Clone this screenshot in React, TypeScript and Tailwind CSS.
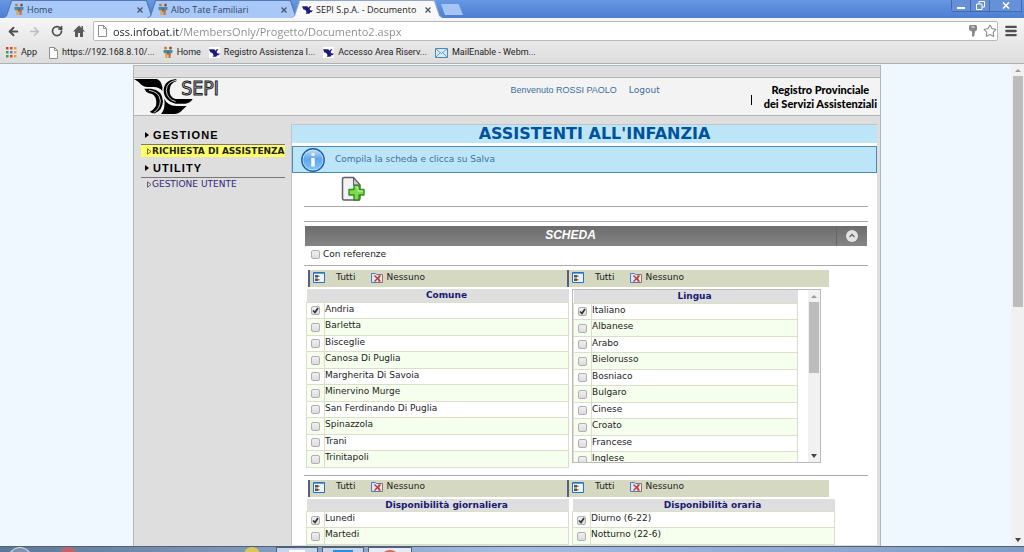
import React, { useState } from 'react';
import { ArrowLeft, ArrowRight, RotateCw, Star, Menu } from 'lucide-react';
import { clsx } from 'clsx';

const UI = "font-['Open_Sans','Noto_Sans',sans-serif]";
const VERDANA = "font-['DejaVu_Sans',sans-serif]";
const ARIAL = "font-['Liberation_Sans',sans-serif]";

const comuni = [
  'Andria',
  'Barletta',
  'Bisceglie',
  'Canosa Di Puglia',
  'Margherita Di Savoia',
  'Minervino Murge',
  'San Ferdinando Di Puglia',
  'Spinazzola',
  'Trani',
  'Trinitapoli',
];

const lingue = [
  'Italiano',
  'Albanese',
  'Arabo',
  'Bielorusso',
  'Bosniaco',
  'Bulgaro',
  'Cinese',
  'Croato',
  'Francese',
  'Inglese',
];

/* ---------- icons ---------- */

function PeopleIcon() {
  return (
    <svg width="10" height="13" viewBox="0 0 20 26" className="shrink-0" aria-hidden="true">
      <circle cx="5" cy="4" r="3" fill="#d97a2b" />
      <circle cx="15" cy="4" r="3" fill="#8a5a3a" />
      <path d="M1 8h18v5l-3 2H4l-3-2z" fill="#3f8fb5" />
      <path d="M4 14h5v10H5z" fill="#e8a13a" />
      <path d="M11 14h5l-1 10h-4z" fill="#d9692b" />
      <path d="M8 9h4v8H8z" fill="#5b6f7d" />
    </svg>
  );
}

function SepiIcon() {
  return (
    <svg width="11" height="11" viewBox="0 0 24 24" className="shrink-0" aria-hidden="true">
      <path fill="#fff" d="M0 0h24v24H0z" />
      <path
        fill="#1c1c7c"
        d="M0 5h10q3 0 4 3l3-3h4l-4 4q-1 5 3 5h4l-3 4h-3l-2 3h-8q3-3 1-6-2-3-6-3z"
      />
    </svg>
  );
}

function PageIcon() {
  return (
    <svg width="9" height="12" viewBox="0 0 9 12" className="shrink-0" aria-hidden="true">
      <path d="M.5.5h5l3 3v8h-8z" fill="#fff" stroke="#8d8d8d" />
      <path d="M5.500.5v3h3" fill="none" stroke="#8d8d8d" />
    </svg>
  );
}

function AppsIcon() {
  const colors = ['#d8412f', '#d8412f', '#e6a23c', '#3f9d4f', '#4f7fd0', '#e6a23c', '#3f9d4f', '#d8412f', '#e6a23c'];
  return (
    <svg width="11" height="11" viewBox="0 0 11 11" className="shrink-0" aria-hidden="true">
      {colors.map((c, i) => (
        <rect key={i} x={(i % 3) * 4} y={Math.floor(i / 3) * 4} width="2.500" height="2.500" fill={c} />
      ))}
    </svg>
  );
}

function MailIcon() {
  return (
    <svg width="13" height="10" viewBox="0 0 13 10" className="shrink-0" aria-hidden="true">
      <path d="M.5.5h12v9H.5z" fill="#d5e8f6" stroke="#4d87b5" />
      <path d="M1 1l5.500 4.500L12 1M1 9l4-4M12 9L8 5" fill="none" stroke="#6aa0c8" />
    </svg>
  );
}

function HomeIcon() {
  return (
    <svg width="12" height="12" viewBox="0 0 12 12" aria-hidden="true">
      <path d="M6 .5L0 6.500h2V12h3V8h2v4h3V6.500h2l-2-2V1H8.500v2z" fill="#5a5a5a" />
    </svg>
  );
}

function KeyIcon() {
  return (
    <svg width="8" height="12" viewBox="0 0 8 12" aria-hidden="true">
      <path d="M1 0h6l1 1v4L6 6.500V8L5 9l1 1-2 2-1-1V6.500L0 5V1z" fill="#8a8a8a" />
      <path d="M2.500 1.500h3v1h-3z" fill="#fff" />
    </svg>
  );
}

function SepiLogo() {
  return (
    <svg width="88" height="36" viewBox="15 54 264 108" role="img" aria-label="SEPI">
      <path d="M15 57h68q14 3 17 26-10-6-28-6H52q-15-1-22-10z" />
      <path d="M30 66q8 14 24 15h20q18 1 26 12V80L80 64z" />
      <path d="M46 86h20q34 4 36 38-2 28-24 36-8 1-16-5 22-9 20-31-2-22-22-24-10-4-14-14z" />
      <path d="M142 57q-36 3-38 33 0 32 36 41h30q14-2 21-14h-51q-18-5-18-25 0-22 20-28z" />
      <path d="M106 116q8 20 36 22h31l-13 12q-10 12-24 12H96q14-16 10-46z" />
      <path
        d="M142 61q-29 4-30 30 1 26 28 34M60 91q32 4 34 32-1 23-20 35"
        fill="none"
        stroke="#f3f3f3"
        strokeWidth="2.500"
      />
      <text
        x="157"
        y="106"
        fontSize="58"
        fontFamily="DejaVu Sans Condensed, DejaVu Sans, sans-serif"
        fill="#ccc"
        stroke="#222"
        strokeWidth="3"
      >
        SEPI
      </text>
    </svg>
  );
}

function InfoIcon() {
  return (
    <svg width="24" height="24" viewBox="0 0 24 24" className="shrink-0" aria-hidden="true">
      <defs>
        <linearGradient id="info" x1="0" y1="0" x2="0" y2="1">
          <stop offset="0" stopColor="#b9daf6" />
          <stop offset=".45" stopColor="#5fa6e6" />
          <stop offset="1" stopColor="#7cc8fb" />
        </linearGradient>
      </defs>
      <circle cx="12" cy="12" r="11.200" fill="#cfe6fa" stroke="#1b5fae" strokeWidth="1.400" />
      <circle cx="12" cy="12" r="9.800" fill="url(#info)" />
      <circle cx="12" cy="6.500" r="1.800" fill="#e6f2fd" />
      <path d="M10.300 10h3.400v8.500h-3.400z" fill="#fff" />
    </svg>
  );
}

function AddPageIcon() {
  return (
    <svg width="24" height="26" viewBox="0 0 24 26" aria-hidden="true">
      <path d="M3 1.500h9.500L19 9v13.500q0 1.500-1.500 1.500H3q-1.500 0-1.500-1.500V3q0-1.500 1.500-1.500z" fill="#f3f3f5" stroke="#5c5f66" strokeWidth="1.500" />
      <path d="M12.500 2v7H19z" fill="#c9ccd2" stroke="#5c5f66" />
      <path d="M13 9.500h5v4h5v5.500h-5v5h-5v-5H8v-5.500h5z" fill="#7ddb4a" stroke="#2f8f22" strokeWidth="1.400" strokeLinejoin="round" />
      <path d="M14 11h3v4h5" fill="none" stroke="#c8f5a8" />
    </svg>
  );
}

function SelectAllIcon() {
  return (
    <svg width="12" height="11" viewBox="0 0 12 11" aria-hidden="true">
      <path d="M.5.5h11v10H.5z" fill="#e8f4ff" stroke="#2f6fb5" />
      <path d="M1 1h10v1H1z" fill="#58a4e6" />
      <path d="M2 3h3v2.500H2zM2 6.500h3V9H2z" fill="#555" />
      <path d="M5 3.500h1.500V5H5zM5 7h1.500v1.500H5z" fill="#d0602f" />
    </svg>
  );
}

function SelectNoneIcon() {
  return (
    <svg width="12" height="10" viewBox="0 0 12 10" aria-hidden="true">
      <path d="M.5.5h4l1 1h4v8h-9z" fill="#dbe6f7" stroke="#5577b5" />
      <path d="M8 1.500h3.500v8H8z" fill="#eee" stroke="#8d6f6f" />
      <path d="M3.500 2.500l6 6M9.500 2.500l-6 6" stroke="#c8322b" strokeWidth="1.400" />
    </svg>
  );
}

/* ---------- browser ---------- */

type TabProps = { title: string; icon: React.ReactNode; active?: boolean };

function BrowserTab({ title, icon, active }: TabProps) {
  return (
    <div
      className={clsx(
        'h-[18px] w-[152px] pt-px px-px -mr-2 [clip-path:polygon(0_100%,3px_88%,8px_0,144px_0,149px_88%,100%_100%)]',
        active ? 'bg-[#8fa6c8] z-10' : 'bg-[#5478b4]'
      )}
    >
      <div
        className={clsx(
          'h-full flex items-center pl-2.5 pr-2 [clip-path:polygon(0_100%,3px_88%,8px_0,142px_0,147px_88%,100%_100%)]',
          active ? 'bg-[#f8f8f8]' : 'bg-[#a8c9f7]'
        )}
      >
        {icon}
        <span className={clsx('ml-[3px] flex-1 whitespace-nowrap text-[9px]', active ? 'text-[#222]' : 'text-[#2f4468]')}>
          {title}
        </span>
        <button aria-label={`Chiudi ${title}`} className="size-3 grid place-items-center">
          <svg width="6" height="6" viewBox="0 0 6 6">
            <path d="M.5.5l5 5M5.500.5l-5 5" stroke="#4a5364" strokeWidth="1.300" />
          </svg>
        </button>
      </div>
    </div>
  );
}

function TitleBar() {
  const control = 'h-3 grid place-items-center border-b border-r border-[#4468a8] bg-[#6690d8]';
  return (
    <div className="h-[18px] flex items-start justify-between pl-[3px] pr-0.5 bg-linear-to-b from-[#6798e3] to-[#4c7ed2]">
      <div className="flex items-start">
        <BrowserTab title="Home" icon={<PeopleIcon />} />
        <BrowserTab title="Albo Tate Familiari" icon={<PeopleIcon />} />
        <BrowserTab title="SEPI S.p.A. - Documento" icon={<SepiIcon />} active />
        <button
          aria-label="Nuova scheda"
          className="mt-1 ml-1.5 h-[11px] w-[22px] bg-[#a4c5f5] [clip-path:polygon(0_0,80%_0,100%_100%,18%_100%)]"
        />
      </div>
      <div className="flex rounded-b border-l border-[#4468a8]">
        <button aria-label="Riduci a icona" className={clsx(control, 'w-[19px]')}>
          <span className="mt-1 h-0.5 w-2 bg-white" />
        </button>
        <button aria-label="Ripristina" className={clsx(control, 'w-[19px]')}>
          <svg width="9" height="9" viewBox="0 0 9 9" fill="#6690d8" stroke="#fff">
            <path d="M3 .5h5.500V6H3z" />
            <path d="M.5 3H6v5.500H.5z" />
          </svg>
        </button>
        <button aria-label="Chiudi" className={clsx(control, 'w-8')}>
          <svg width="8" height="7" viewBox="0 0 8 7">
            <path d="M1 .5l6 6M7 .5l-6 6" stroke="#fff" strokeWidth="1.600" />
          </svg>
        </button>
      </div>
    </div>
  );
}

function AddressBar() {
  return (
    <div className="h-[26px] flex items-center gap-3 pl-[7px] pr-1.5 text-[#4f4f4f]">
      <button aria-label="Indietro"><ArrowLeft size={13} strokeWidth={3.5} /></button>
      <button aria-label="Avanti" className="-ml-1 text-[#bdbdbd]"><ArrowRight size={13} strokeWidth={3} /></button>
      <button aria-label="Ricarica" className="-ml-0.5"><RotateCw size={12} strokeWidth={3.5} /></button>
      <button aria-label="Pagina iniziale" className="-ml-0.5"><HomeIcon /></button>
      <form className="flex-1 h-5 flex items-center gap-1.5 -ml-1 pl-1 pr-0 rounded-xs border border-[#b9b9b9] bg-white">
        <PageIcon />
        <input
          aria-label="Indirizzo"
          defaultValue="oss.infobat.it/MembersOnly/Progetto/Documento2.aspx"
          className="flex-1 h-full outline-none text-[11px] text-transparent bg-clip-text bg-[linear-gradient(90deg,#222_66px,#888_66px)]"
        />
        <KeyIcon />
        <button type="button" aria-label="Aggiungi ai preferiti" className="text-[#8a8a8a]">
          <Star size={14} strokeWidth={1.8} />
        </button>
      </form>
      <button aria-label="Menu" className="-ml-1.5"><Menu size={14} strokeWidth={4} /></button>
    </div>
  );
}

function Bookmarks() {
  const links = [
    { label: 'App', icon: <AppsIcon /> },
    { label: 'https://192.168.8.10/...', icon: <PageIcon /> },
    { label: 'Home', icon: <PeopleIcon /> },
    { label: 'Registro Assistenza I...', icon: <SepiIcon /> },
    { label: 'Accesso Area Riserv...', icon: <SepiIcon /> },
    { label: 'MailEnable - Webm...', icon: <MailIcon /> },
  ];
  return (
    <nav className="h-5 flex items-center gap-2 px-1.5 pb-0.5 border-b border-[#b0b0b0] text-[9px] text-[#222] font-['Roboto',sans-serif]">
      {links.map((l) => (
        <a key={l.label} href="#" className="flex items-center gap-1 first:mr-1 whitespace-nowrap">
          {l.icon}
          {l.label}
        </a>
      ))}
    </nav>
  );
}

function Scrollbar({ thumb, className }: { thumb: string; className?: string }) {
  return (
    <div className={clsx('shrink-0 flex flex-col items-center bg-[#f1f1f1]', className)} aria-hidden="true">
      <svg width="6" height="12" viewBox="0 0 6 12"><path d="M0 8l3-3 3 3z" fill="#9a9a9a" /></svg>
      <div className={clsx('w-2.5 bg-[#bcbcbc]', thumb)} />
      <svg width="6" height="12" viewBox="0 0 6 12" className="mt-auto"><path d="M0 4h6L3 8z" fill="#444" /></svg>
    </div>
  );
}

/* ---------- page ---------- */

type CheckProps = { id: string; checked?: boolean };

function Check({ id, checked = false }: CheckProps) {
  const [on, setOn] = useState(checked);
  return (
    <span className="inline-grid size-[9px] shrink-0">
      <input
        id={id}
        type="checkbox"
        checked={on}
        onChange={(e) => setOn(e.target.checked)}
        className="col-start-1 row-start-1 appearance-none size-[9px] rounded-xs border border-[#b0b0b0] bg-linear-to-b from-[#f0f0f0] to-[#dcdcdc]"
      />
      {on && (
        <svg viewBox="0 0 9 9" className="col-start-1 row-start-1 size-[9px] pointer-events-none" aria-hidden="true">
          <path d="M2 4.500l2 2 3-4.500" fill="none" stroke="#333" strokeWidth="1.700" />
        </svg>
      )}
    </span>
  );
}

function SelectBar({ className }: { className?: string }) {
  return (
    <div className={clsx('h-[17px] flex items-center pl-[3px] pb-0.5 border-l-2 border-[#56607c] bg-[#d5d9c1] text-[9px] text-[#222]', className)}>
      <SelectAllIcon />
      <button className="ml-[11px]">Tutti</button>
      <button className="ml-4 flex items-center gap-[3px]">
        <SelectNoneIcon />
        Nessuno
      </button>
    </div>
  );
}

type GridProps = { id: string; title: string; items: string[] };

function CheckGrid({ id, title, items }: GridProps) {
  return (
    <table className="w-full border-collapse text-[9px] leading-3 text-[#222]">
      <thead>
        <tr className="h-[13px] bg-[#dedede] text-[#191970]">
          <th className="w-[18px] p-0" />
          <th className="p-0">{title}</th>
        </tr>
      </thead>
      <tbody>
        {items.map((item, i) => (
          <tr key={item} className="border border-[#d9dfc8] odd:h-4 even:h-[17px] odd:bg-white even:bg-[#f6ffee]">
            <td className="p-0 pt-px border-r border-[#d9dfc8] leading-none">
              <span className="flex justify-center"><Check id={`${id}-${i}`} checked={i === 0} /></span>
            </td>
            <td className="p-0 align-top">
              <label htmlFor={`${id}-${i}`} className="block">{item}</label>
            </td>
          </tr>
        ))}
      </tbody>
    </table>
  );
}

function Sidebar() {
  const heading = clsx('flex items-center gap-1 pl-1 text-[11px] leading-4 font-bold tracking-widest text-black', ARIAL);
  const arrow = (
    <svg width="4" height="6" viewBox="0 0 4 6" aria-hidden="true"><path d="M0 0l4 3-4 3z" /></svg>
  );
  const bullet = (
    <svg width="5" height="7" viewBox="0 0 5 7" className="shrink-0" aria-hidden="true">
      <path d="M.5.8l3.500 2.700L.5 6.200z" fill="none" stroke="#444" strokeWidth=".8" />
    </svg>
  );
  return (
    <aside className="w-[157px] shrink-0 pt-[3px] pl-[7px] pr-1.5 text-[9px] leading-3 whitespace-nowrap">
      <h2 className={heading}>{arrow}GESTIONE</h2>
      <div className="mt-px mb-[3px] border-t border-[#777]">
        <a href="#" className="flex items-center pl-1.5 bg-[#ffff66] font-bold text-[#222]">{bullet}RICHIESTA DI ASSISTENZA</a>
      </div>
      <h2 className={heading}>{arrow}UTILITY</h2>
      <div className="mt-px border-t border-[#777]">
        <a href="#" className="flex items-center pl-1.5 text-[#33267a]">{bullet}GESTIONE UTENTE</a>
      </div>
    </aside>
  );
}

function Header() {
  return (
    <header className="h-[39px] flex border-y border-[#b5b5b5] bg-[#f3f3f3]">
      <SepiLogo />
      <div className="flex-1 flex justify-end gap-3 pt-1.5 pr-[91px] text-[9px] text-[#3c6e9f]">
        <span className={ARIAL}>Benvenuto ROSSI PAOLO</span>
        <a href="#">Logout</a>
      </div>
      <div className="flex items-center gap-3 pr-[3px]">
        <span className="mt-1.5 h-2.5 w-px bg-black" />
        <p className="text-center text-[11px] leading-3.5 font-black text-black font-['Lato',sans-serif]">
          Registro Provinciale
          <br />
          dei Servizi Assistenziali
        </p>
      </div>
    </header>
  );
}

function Scheda() {
  return (
    <section className="pl-3 pr-[9px]">
      <div className="h-[33px] pl-[37px] pt-[3px]">
        <button aria-label="Nuovo documento"><AddPageIcon /></button>
      </div>
      <hr className="border-[#aaa]" />
      <hr className="mt-3.5 border-[#aaa]" />

      <div className="mt-1 mx-px h-5 flex items-center bg-linear-to-b from-[#6c6c6c] to-[#858585]">
        <h2 className={clsx('flex-1 pb-0.5 text-center text-[12px] font-bold italic text-white', ARIAL)}>SCHEDA</h2>
        <button aria-label="Comprimi" className="h-full w-[31px] grid place-items-center border-l border-[#666]">
          <svg width="12" height="12" viewBox="0 0 12 12">
            <circle cx="6" cy="6" r="6" fill="#e3e3e3" />
            <path d="M3.500 7L6 4.500 8.500 7" fill="none" stroke="#666" strokeWidth="1.300" />
          </svg>
        </button>
      </div>

      <div className="h-[19px] flex items-center gap-[3px] pl-[7px] pb-0.5 text-[9px] text-[#222]">
        <Check id="referenze" />
        <label htmlFor="referenze">Con referenze</label>
      </div>
      <hr className="border-[#aaa]" />

      <div className="mt-1 flex pl-1">
        <SelectBar className="w-[259px]" />
        <SelectBar className="w-[262px]" />
      </div>
      <div className="mt-0.5 flex items-start gap-[3px] pl-0.5">
        <div className="w-[263px]">
          <CheckGrid id="comune" title="Comune" items={comuni} />
        </div>
        <div className="w-[249px] h-[174px] flex overflow-hidden border border-[#bbb]">
          <div className="flex-1">
            <CheckGrid id="lingua" title="Lingua" items={lingue} />
          </div>
          <Scrollbar thumb="h-[71px]" className="ml-2.5 w-3" />
        </div>
      </div>
      <hr className="mt-[7px] border-[#aaa]" />

      <div className="mt-1 flex pl-1">
        <SelectBar className="w-[259px]" />
        <SelectBar className="w-[262px]" />
      </div>
      <div className="mt-0.5 flex items-start gap-[3px] pl-0.5">
        <div className="w-[263px]">
          <CheckGrid id="giorno" title="Disponibilità giornaliera" items={['Lunedi', 'Martedi']} />
        </div>
        <div className="w-[263px]">
          <CheckGrid id="ora" title="Disponibilità oraria" items={['Diurno (6-22)', 'Notturno (22-6)']} />
        </div>
      </div>
    </section>
  );
}

function Taskbar() {
  return (
    <footer className="h-1.5 shrink-0 flex overflow-hidden border-t border-[#4f6178] bg-linear-to-r from-[#5d7796] via-[#a3bde0] to-[#7f9cc4]">
      <div className="ml-2 size-6 rounded-full border border-white/70 bg-[#7d93b0]" />
      <div className="ml-7 size-4 rounded-full bg-[#c8606a]" />
      <div className="ml-[168px] size-4 rounded-full bg-[#dcc65a]" />
      <div className="ml-4 h-8 w-[42px] pt-0.5 border border-[#4f6178] bg-[#c8d6ea]">
        <div className="mx-auto h-6 w-4 bg-white" />
      </div>
      <div className="ml-1 h-8 w-[42px] pt-0.5 border border-[#4f6178] bg-[#c8d6ea]">
        <div className="mx-auto h-6 w-5 bg-[#2b8fdc]" />
      </div>
      <div className="ml-1 h-8 w-11 pt-0.5 border border-[#4f6178] bg-[#e6ecf5]">
        <div className="mx-auto size-5 rounded-full bg-[#d8665c]" />
      </div>
    </footer>
  );
}

export default function App() {
  return (
    <div className={clsx('h-screen flex flex-col overflow-hidden bg-white', UI)}>
      <TitleBar />
      <div className="bg-linear-to-b from-[#f6f6f6] to-[#dcdcdc]">
        <AddressBar />
        <Bookmarks />
      </div>

      <div className={clsx('flex-1 min-h-0 flex overflow-hidden', VERDANA)}>
        <div className="flex-1 pt-px pl-[3px] overflow-hidden bg-[#f0f8ff]">
          <div className="mx-auto w-full max-w-[748px] min-h-full border border-b-0 border-[#b5b5b5] bg-[#dedede]">
            <div className="h-[11px]" />
            <Header />
            <div className="flex pt-2 pr-[3px]">
              <Sidebar />
              <main className="flex-1 min-w-0 border-l border-t border-[#c4c4c4] bg-white">
                <h1 className="h-[18px] pl-5 text-center text-[16px] leading-[18px] font-bold text-[#00529b] bg-[#bde5f8]">
                  ASSISTENTI ALL'INFANZIA
                </h1>
                <div className="mt-[3px] h-[27px] flex items-center gap-2.5 pl-2 border border-[#4d8ab0] bg-[#bde5f8] text-[9px] text-[#3a739f]">
                  <InfoIcon />
                  Compila la scheda e clicca su Salva
                </div>
                <Scheda />
              </main>
            </div>
          </div>
        </div>
        <Scrollbar thumb="h-[231px]" className="w-[13px]" />
      </div>
      <Taskbar />
    </div>
  );
}
